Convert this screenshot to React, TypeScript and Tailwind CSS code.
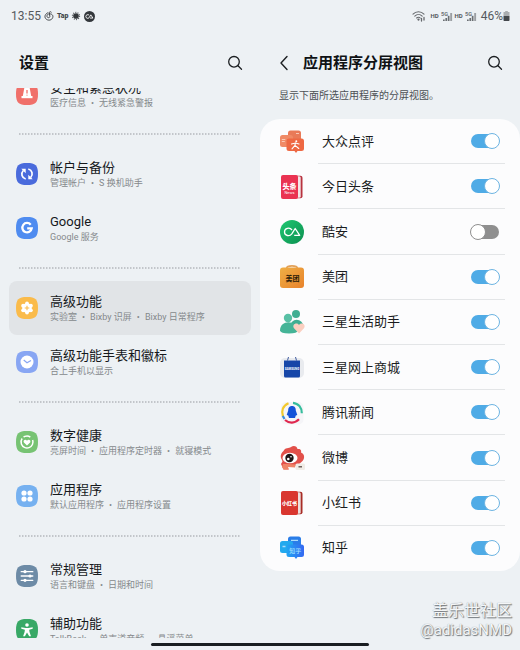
import { useState } from "react";
import type { ReactNode } from "react";

const WHITE = "#ffffff";

/* ---------- status bar ---------- */

const SignalIcon = () => (
  <svg viewBox="0 0 12 11" className="w-3 h-[11px]" aria-hidden="true">
    <text x="0" y="4.5" fontSize="5.5" fontWeight="700" fill="#6b6f73" fontFamily="Roboto, sans-serif">
      5G
    </text>
    <path d="M2 10V8.6h1.7V10zM4.4 10V7h1.7v3z" fill="#6b6f73" />
    <path d="M6.8 10V4.8h1.7V10z" fill="#6b6f73" />
    <path d="M9.2 10V2h1.9v8z" fill="#9b9fa3" />
  </svg>
);

const StatusBar = () => (
  <div className="flex items-center justify-between h-8 pl-[11px] pr-[10px] text-[12px] leading-none text-[#55595d]">
    <div className="flex items-center gap-[3px]">
      <span>13:55</span>
      <svg viewBox="0 0 12 12" className="size-[10px]" fill="none" stroke="#44484c" strokeWidth="1.2" strokeLinecap="round" aria-hidden="true">
        <path d="M4.6 2.1C1.2 3.4.2 7 2.1 9.2c2.1 2.5 6.2 2.3 7.9-.3 1.7-2.7.2-5.500-3.200-5.500-2.300 0-3.600 1.500-3.200 3.300.4 1.700 3.200 1.900 3.400 0L6.400 1.700c.3-1.100 1.600-1.100 2.300-.4" />
      </svg>
      <span className="text-[7px] font-black text-[#44484c]">Tap</span>
      <svg viewBox="0 0 12 12" className="size-[10px]" aria-hidden="true">
        <circle cx="6" cy="6" r="3.400" fill="#33373b" />
        <circle cx="6" cy="6" r="4.300" fill="none" stroke="#55595d" strokeWidth="1.400" strokeDasharray="1.2 1.500" />
      </svg>
      <svg viewBox="0 0 12 12" className="size-[11px]" aria-hidden="true">
        <circle cx="6" cy="6" r="6" fill="#33373b" />
        <path d="M5.600 4.500C4.500 3.500 2 4 2 6s2.500 2.600 3.500 1.400L7.400 4.200l2.300 3.500H6.600" fill="none" stroke={WHITE} strokeWidth="1" />
      </svg>
    </div>
    <div className="flex items-center gap-[2px]">
      <svg viewBox="0 0 14 12" className="w-[14px] h-3 mr-[2px]" fill="none" stroke="#66696d" strokeWidth="1.1" strokeLinecap="round" aria-hidden="true">
        <path d="M1 4.200C4.100 1 8.900 1 12 4.200M2.800 6.100c2.200-2.200 5.200-2.200 7.400 0M4.600 8c1.100-1.100 2.700-1.100 3.700 0" />
        <circle cx="6.500" cy="9.600" r=".6" fill="#66696d" />
        <path d="M9.500 8.500v2.500M12 10V7.500" strokeWidth="1.300" />
      </svg>
      <span className="text-[6px] font-bold">HD</span>
      <SignalIcon />
      <span className="text-[6px] font-bold">HD</span>
      <SignalIcon />
      <div className="flex items-center pl-[2px]">
        <span>46%</span>
        <svg viewBox="0 0 7 10" className="w-[7px] h-[10px]" aria-hidden="true">
          <path d="M2.200 0h2.600v1H6.500v4h-6V1h1.700z" fill="#a9adb0" />
          <path d="M.5 5h6v4.300q0 .7-.7.7H1.200q-.7 0-.7-.7z" fill="#44484c" />
        </svg>
      </div>
    </div>
  </div>
);

const SearchButton = ({ label }: { label: string }) => (
  <button type="button" aria-label={label} className="flex items-center justify-center size-4">
    <svg viewBox="0 0 16 16" className="size-4" fill="none" stroke="#1c1f22" strokeWidth="1.300" strokeLinecap="round">
      <circle cx="7" cy="6.800" r="5.300" />
      <path d="M11 10.800l3.500 3.500" />
    </svg>
  </button>
);

/* ---------- left pane ---------- */

type Item = {
  title: string;
  details: string[];
  color: string;
  glyph: ReactNode;
  active?: boolean;
};

const groups: Item[][] = [
  [
    {
      title: "安全和紧急状况",
      details: ["医疗信息", "无线紧急警报"],
      color: "#f0706a",
      glyph: (
        <>
          <path d="M8.500 4h5l1.800 9.500H6.700z" fill={WHITE} />
          <path d="M5.500 13h11v2.200h-11z" fill={WHITE} />
          <path d="M11 7v3.500M11 11.700v.9" stroke="#f0706a" strokeWidth="1.300" />
        </>
      ),
    },
  ],
  [
    {
      title: "帐户与备份",
      details: ["管理帐户", "S 换机助手"],
      color: "#4a6bdc",
      glyph: (
        <>
          <path d="M9.700 16C5.800 15 4.600 10.500 7.300 7.500M12.300 6c3.900 1 5.100 5.500 2.400 8.500" fill="none" stroke={WHITE} strokeWidth="1.700" />
          <path d="M5.300 5.800h4.400v4.400zM16.700 16.200h-4.400v-4.400z" fill={WHITE} />
        </>
      ),
    },
    {
      title: "Google",
      details: ["Google 服务"],
      color: "#4f8cf0",
      glyph: <path d="M14.700 7.700A4.700 4.700 0 1 0 15.700 11.400H11.200" fill="none" stroke={WHITE} strokeWidth="2.300" />,
    },
  ],
  [
    {
      title: "高级功能",
      details: ["实验室", "Bixby 识屏", "Bixby 日常程序"],
      color: "#fabb4b",
      active: true,
      glyph: (
        <>
          <g fill={WHITE}>
            <circle cx="11" cy="11" r="4.800" />
            <circle cx="11" cy="6.500" r="1.900" />
            <circle cx="14.900" cy="8.700" r="1.900" />
            <circle cx="14.900" cy="13.300" r="1.900" />
            <circle cx="11" cy="15.500" r="1.900" />
            <circle cx="7.100" cy="13.300" r="1.900" />
            <circle cx="7.100" cy="8.700" r="1.900" />
          </g>
          <path d="M11 8.700v4.600M8.700 11h4.600" stroke="#fabb4b" strokeWidth="1.100" />
        </>
      ),
    },
    {
      title: "高级功能手表和徽标",
      details: ["合上手机以显示"],
      color: "#88a6f3",
      glyph: (
        <>
          <circle cx="11" cy="11" r="6.500" fill={WHITE} />
          <path d="M7.700 9l3.300 2.700 4-2.200" fill="none" stroke="#88a6f3" strokeWidth="1.200" />
        </>
      ),
    },
  ],
  [
    {
      title: "数字健康",
      details: ["亮屏时间", "应用程序定时器", "就寝模式"],
      color: "#77c373",
      glyph: (
        <>
          <circle cx="11" cy="11" r="6" fill="none" stroke={WHITE} strokeWidth="1.500" strokeDasharray="24 2 7 4.700" transform="rotate(-20 11 11)" />
          <path d="M11 14.500L7.900 11.400c-1.300-1.800 1.500-3.800 3.100-1.700 1.600-2.100 4.400-.1 3.100 1.700z" fill={WHITE} />
        </>
      ),
    },
    {
      title: "应用程序",
      details: ["默认应用程序", "应用程序设置"],
      color: "#76b1f0",
      glyph: (
        <g fill={WHITE}>
          <circle cx="8" cy="8" r="2.600" />
          <circle cx="14" cy="8" r="2.600" />
          <circle cx="8" cy="14" r="2.600" />
          <circle cx="14" cy="14" r="2.600" />
        </g>
      ),
    },
  ],
  [
    {
      title: "常规管理",
      details: ["语言和键盘", "日期和时间"],
      color: "#6d8ba6",
      glyph: (
        <>
          <path d="M5.200 6.700h11.600M5.200 11h11.600M5.200 15.300h11.600" stroke={WHITE} strokeWidth="1.300" strokeLinecap="round" />
          <g fill={WHITE}>
            <circle cx="9" cy="6.700" r="1.600" />
            <circle cx="14" cy="11" r="1.600" />
            <circle cx="9" cy="15.300" r="1.600" />
          </g>
        </>
      ),
    },
    {
      title: "辅助功能",
      details: ["TalkBack", "单声道音频", "悬浮菜单"],
      color: "#38a866",
      glyph: (
        <>
          <circle cx="11" cy="6" r="1.800" fill={WHITE} />
          <path d="M5.300 8.200l4.200.8h3l4.200-.8v1.600l-3.500.9.300 2.300 1.500 4.200h-1.800L11 13.600 8.900 17.200H7.100L8.600 13l.3-2.300-3.600-.9z" fill={WHITE} />
        </>
      ),
    },
  ],
];

const SettingRow = ({ item }: { item: Item }) => (
  <a
    href="#"
    aria-current={item.active ? "page" : undefined}
    className={`flex items-center h-[54px] shrink-0 gap-3 pl-[7px] rounded-lg ${item.active ? "bg-[#e1e4e7]" : ""}`}
  >
    <svg viewBox="0 0 22 22" className="size-[22px] shrink-0" aria-hidden="true">
      <path d="M11 0c8.500 0 11 2.500 11 11s-2.500 11-11 11S0 19.500 0 11 2.500 0 11 0z" fill={item.color} />
      {item.glyph}
    </svg>
    <div className="pt-[2px] whitespace-nowrap">
      <div className="text-[13px] leading-4 text-[#16191c]">{item.title}</div>
      <div className="flex text-[9px] leading-[14px] text-[#85898c]">
        {item.details.map((detail, index) => (
          <span key={detail}>
            {index > 0 && <span className="mx-[5px]">•</span>}
            {detail}
          </span>
        ))}
      </div>
    </div>
  </a>
);

const Separator = () => (
  <div className="flex items-center h-[26px] shrink-0 px-[10px]">
    <svg className="w-full h-[2px]" aria-hidden="true">
      <line x1="0" y1="1" x2="100%" y2="1" stroke="#b4b8bc" strokeWidth="1.500" strokeDasharray="1.500 1.500" />
    </svg>
  </div>
);

const SettingsPane = () => (
  <section className="flex flex-col flex-1 min-w-0 min-h-0">
    <header className="flex items-center justify-between h-14 shrink-0 pl-[19px] pr-[17px] pt-[6px]">
      <h1 className="text-[15px] leading-5 font-bold text-[#0f1214]">设置</h1>
      <SearchButton label="搜索设置" />
    </header>
    <nav className="flex flex-col flex-1 min-h-0 overflow-hidden px-[9px]">
      <div className="flex flex-col -mt-[21px]">
        {groups.map((group, index) => (
          <div key={group[0].title} className="flex flex-col">
            {index > 0 && <Separator />}
            {group.map((item) => (
              <SettingRow key={item.title} item={item} />
            ))}
          </div>
        ))}
      </div>
    </nav>
  </section>
);

/* ---------- right pane ---------- */

const cjk = "Roboto, 'Noto Sans CJK SC', sans-serif";

type AppEntry = { name: string; on: boolean; icon: ReactNode };

const apps: AppEntry[] = [
  {
    name: "大众点评",
    on: true,
    icon: (
      <>
        <rect x="8" y="0.500" width="13" height="11" rx="2.500" fill="#e97a58" />
        <rect x="0" y="5" width="13" height="12" rx="2.500" fill="#f08a66" />
        <path d="M9 8.500h12.500q2.500 0 2.500 2.500v7.500q0 2.500-2.500 2.500h-4l-1.500 2-1.500-2H9q-2.500 0-2.500-2.500V11Q6.500 8.500 9 8.500z" fill="#ee6843" />
        <path d="M12 18.800l2.800-3.300.8-2.700M11.500 14l4-1 3.500 1M15 15.300l3.800 3.200" fill="none" stroke={WHITE} strokeWidth="1.100" strokeLinecap="round" />
        <circle cx="16.300" cy="11.300" r="1" fill={WHITE} />
        <path d="M1.800 9.500h3.500M1.800 11.500h3M16 3.500h3" stroke="#fbd0bf" strokeWidth=".9" />
      </>
    ),
  },
  {
    name: "今日头条",
    on: true,
    icon: (
      <>
        <rect x="4" y="0.800" width="18.500" height="22.500" rx="2" fill="#b8323f" />
        <rect x="4" y="1.200" width="16.700" height="21.500" rx="1.500" fill="#f3e5e7" />
        <rect x="1" y="0" width="17" height="24" rx="2" fill="#ea3352" />
        <text x="9.500" y="13.500" fontSize="7" fontWeight="900" fill={WHITE} textAnchor="middle" fontFamily={cjk}>
          头条
        </text>
        <text x="9.500" y="19" fontSize="4" fill={WHITE} textAnchor="middle" fontFamily={cjk}>
          News
        </text>
      </>
    ),
  },
  {
    name: "酷安",
    on: false,
    icon: (
      <>
        <defs>
          <linearGradient id="coolapk" x1="0" y1="0" x2="1" y2="1">
            <stop offset="0" stopColor="#1fc872" />
            <stop offset="1" stopColor="#0c8f50" />
          </linearGradient>
        </defs>
        <circle cx="12" cy="12" r="12" fill="url(#coolapk)" />
        <path d="M12 10C9.500 6.800 4.500 8.300 4.500 12s5 5 7.300 1.900L15.200 8.500l4.500 6.800h-5.500" fill="none" stroke={WHITE} strokeWidth="1.300" strokeLinejoin="round" />
      </>
    ),
  },
  {
    name: "美团",
    on: true,
    icon: (
      <>
        <defs>
          <linearGradient id="meituan" x1="0" y1="0" x2="1" y2="1">
            <stop offset="0" stopColor="#efaf45" />
            <stop offset="1" stopColor="#e8822b" />
          </linearGradient>
        </defs>
        <path d="M6.500 3.500C7 0 17 0 17.500 3.500" fill="none" stroke="#e2a15a" strokeWidth="1.600" />
        <rect x="0" y="2.500" width="24" height="20.500" rx="3" fill="url(#meituan)" />
        <text x="12.500" y="16" fontSize="7" fontWeight="700" fill="#2b1c08" textAnchor="middle" fontFamily={cjk}>
          美团
        </text>
      </>
    ),
  },
  {
    name: "三星生活助手",
    on: true,
    icon: (
      <>
        <circle cx="16" cy="4" r="4" fill="#3fae92" />
        <path d="M10 18c0-11 13-11 14 0z" fill="#3fae92" />
        <circle cx="8" cy="8" r="4.200" fill="#58c0a5" />
        <path d="M0 20.500C0 9.500 16.500 9.500 18 20.500q-.5 3-9 3T0 20.500z" fill="#45b497" />
        <path d="M19 23.500l-5-5.300c-2.400-3.400 2.300-6.600 5-3.300 2.700-3.300 7.400-.1 5 3.300z" fill="#fbcfc0" />
      </>
    ),
  },
  {
    name: "三星网上商城",
    on: true,
    icon: (
      <>
        <rect x="0" y="2" width="24" height="20" rx="5" fill="#e9ebef" />
        <path d="M7.500 4.500L8.500 1M16.500 4.500l-1-3.500" stroke="#3f5ba0" strokeWidth="1" />
        <path d="M4 4.500h16v15.500q0 1.500-1.500 1.500h-13Q4 21.500 4 20z" fill="#1646a8" />
        <text x="12" y="13.500" fontSize="3" fontWeight="700" fill={WHITE} textAnchor="middle" fontFamily={cjk}>
          SAMSUNG
        </text>
      </>
    ),
  },
  {
    name: "腾讯新闻",
    on: true,
    icon: (
      <>
        <rect x="1" y="1" width="22.500" height="22.500" rx="5" fill="#f5f5f8" />
        <g fill="none" strokeWidth="2.200">
          <path d="M8.500 2.300C3 4.500.8 10 3 15.500" stroke="#f3c92d" />
          <path d="M13 1.800c5.500.5 9 5 8.800 10.500" stroke="#35bd9c" />
          <path d="M5 19c4 3.500 10 3.500 14-.7" stroke="#e0284f" />
          <path d="M2.800 15l1.700 3" stroke="#3a8ee0" />
        </g>
        <path d="M12 5c3 0 3.800 2.200 3.800 4.500l1.500 4.500-1.500.5-.8 2.500H9l-.8-2.500-1.500-.5L8.200 9.500C8.200 7.200 9 5 12 5z" fill="#1553d8" />
      </>
    ),
  },
  {
    name: "微博",
    on: true,
    icon: (
      <>
        <path d="M3.500 5C5 1.500 9 2.500 11 1c3-2 6-.5 6.500 2 3.500-.5 4 2 3.500 3.500 4 1.500 4 6.500 1 9L17 20H7l1.500 3.500H3.500L1 18c1-2 2-2 1-4-2-3-1.500-6.500 1.500-9z" fill="#e2504a" />
        <path d="M3 18l4 0 9 .5-1 3-7-.5 1 2.500H3.500L2 21z" fill="#ef8467" />
        <ellipse cx="10" cy="12" rx="7.500" ry="5.300" fill={WHITE} />
        <circle cx="9.500" cy="12" r="4.200" fill="#1d1516" />
        <circle cx="8.300" cy="13" r="1.300" fill={WHITE} />
        <circle cx="11" cy="10.700" r=".8" fill={WHITE} />
        <rect x="15.500" y="17.500" width="9.500" height="6.500" rx="1.500" fill="#f0ece6" />
        <path d="M18.500 20.800h3.500" stroke="#5a4c48" strokeWidth="1.300" />
      </>
    ),
  },
  {
    name: "小红书",
    on: true,
    icon: (
      <>
        <rect x="4" y="0.800" width="18.500" height="22.500" rx="2" fill="#a82c26" />
        <rect x="4" y="1.200" width="16.700" height="21.500" rx="1.500" fill="#ecdedd" />
        <rect x="1" y="0" width="17" height="24" rx="2" fill="#d9362f" />
        <text x="9.500" y="13.500" fontSize="5" fontWeight="900" fill={WHITE} textAnchor="middle" fontFamily={cjk}>
          小红书
        </text>
      </>
    ),
  },
  {
    name: "知乎",
    on: true,
    icon: (
      <>
        <defs>
          <linearGradient id="zhihu" x1="0" y1="0" x2="1" y2="0">
            <stop offset="0" stopColor="#22a4f2" />
            <stop offset="1" stopColor="#3568f2" />
          </linearGradient>
        </defs>
        <rect x="8" y="0.500" width="13" height="11" rx="2.500" fill="#2a7de8" />
        <rect x="0" y="5" width="13" height="12" rx="2.500" fill="#23a9ee" />
        <path d="M9 8.500h12.500q2.500 0 2.500 2.500v7.500q0 2.500-2.500 2.500h-4l-1.500 2-1.500-2H9q-2.500 0-2.500-2.500V11Q6.500 8.500 9 8.500z" fill="url(#zhihu)" />
        <path d="M11 4.300h7M2.500 10.500h3" stroke="#a9dcfb" strokeWidth="1.300" />
        <text x="15.300" y="17" fontSize="6" fontWeight="500" fill="#a5e3ff" textAnchor="middle" fontFamily={cjk}>
          知乎
        </text>
      </>
    ),
  },
];

const AppRow = ({ app, last }: { app: AppEntry; last: boolean }) => {
  const [on, setOn] = useState(app.on);

  return (
    <label className="flex flex-1 items-stretch gap-[14px] pl-5 pr-[15px]">
      <span className="flex items-center">
        <svg viewBox="0 0 24 24" className="size-6 overflow-visible" aria-hidden="true">
          {app.icon}
        </svg>
      </span>
      <span
        className={`flex flex-1 items-center justify-between pl-1 pr-[6px] border-b ${last ? "border-transparent" : "border-[#e3e5e7]"}`}
      >
        <span className="pt-px text-[13px] leading-5 text-[#1a1c1e]">{app.name}</span>
        <input
          type="checkbox"
          role="switch"
          checked={on}
          onChange={(e) => setOn(e.target.checked)}
          className="flex items-center appearance-none w-7 h-[14px] rounded-full bg-[#8f8f8f] checked:bg-[#4fabe6] before:block before:size-4 before:-ml-px before:shrink-0 before:rounded-full before:border before:border-[#8f8f8f] before:bg-white checked:before:ml-[13px] checked:before:border-[#6db4e2]"
        />
      </span>
    </label>
  );
};

const SplitViewPane = () => (
  <section className="flex flex-col flex-1 min-w-0 min-h-0">
    <header className="flex items-center h-14 shrink-0 pl-[19px] pr-[17px] pt-[6px]">
      <button type="button" aria-label="返回" className="flex items-center size-4">
        <svg viewBox="0 0 10 16" className="w-[10px] h-4" fill="none" stroke="#1c1f22" strokeWidth="1.400" strokeLinecap="round" strokeLinejoin="round">
          <path d="M8 1.500L2 8l6 6.500" />
        </svg>
      </button>
      <h2 className="flex-1 pl-2 text-[15px] leading-5 font-bold text-[#0f1214]">应用程序分屏视图</h2>
      <SearchButton label="搜索应用程序" />
    </header>
    <p className="h-[31px] shrink-0 pl-[19px] text-[10px] leading-4 text-[#4c5054]">显示下面所选应用程序的分屏视图。</p>
    <div className="flex flex-col flex-1 rounded-[20px] bg-[#fcfcfd]">
      {apps.map((app, index) => (
        <AppRow key={app.name} app={app} last={index === apps.length - 1} />
      ))}
    </div>
    <div className="h-[67px] shrink-0 pt-[30px] pr-2 text-right text-[#f4f6f7] [text-shadow:1px_1px_1px_#6f7478,0_0_1px_#8a8e92]">
      <div className="text-[16px] leading-5">盖乐世社区</div>
      <div className="text-[15px] leading-[18px]">@adidasNMD</div>
    </div>
  </section>
);

export default function App() {
  return (
    <div className="flex flex-col h-screen overflow-hidden bg-[#edf1f4] font-[Roboto,'Noto_Sans_CJK_SC',sans-serif]">
      <StatusBar />
      <main className="flex flex-1 min-h-0">
        <SettingsPane />
        <SplitViewPane />
      </main>
      <div className="flex items-center justify-center h-3 shrink-0">
        <div className="w-[42%] h-[3px] rounded-full bg-[#1a1e21]" />
      </div>
    </div>
  );
}
